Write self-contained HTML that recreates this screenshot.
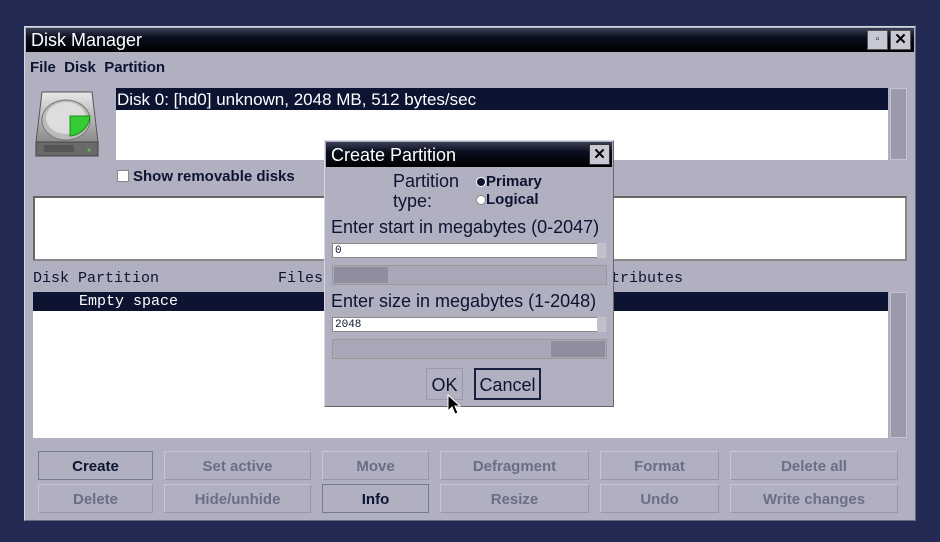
<!DOCTYPE html>
<html><head><style>
*{box-sizing:border-box;margin:0;padding:0}
body{width:940px;height:542px;background:#232b55;position:relative;overflow:hidden;font-family:"Liberation Sans",sans-serif;color:#0c1432}
.a{position:absolute}
.win{left:24px;top:26px;width:892px;height:495px;background:#b0b0c0;border:1px solid #d8d8e4;border-right-color:#6a6a7a;border-bottom-color:#6a6a7a}
.tb{background:linear-gradient(#3a4058,#0a0e1e 40%,#000);color:#fff}
.white{background:#fff}
.sel{background:#0c1432;color:#fff}
.sb{background:#9a9aaa;border:1px solid #c4c4d0}
.btn{position:absolute;height:29px;border:1px solid #9696a8;border-top-color:#c8c8d4;border-left-color:#c8c8d4;text-align:center;font:bold 15px/29px "Liberation Sans",sans-serif;color:#6a6e86}
.btn.on{color:#0c1432;border:1px solid #7a7a8e}
.mono{font-family:"Liberation Mono",monospace;font-size:15px}
</style></head><body>
<div class="a win"></div>
<div class="a tb" style="left:26px;top:28px;width:888px;height:24px;font-size:18px;line-height:25px;padding-left:5px">Disk Manager</div>
<div class="a" style="left:867px;top:30px;width:21px;height:20px;background:#c8c8d4;border:1px solid #555;font-size:10px;text-align:center;line-height:18px;color:#000">▫</div>
<div class="a" style="left:890px;top:30px;width:21px;height:20px;background:#c8c8d4;border:1px solid #555;font:bold 15px/18px sans-serif;text-align:center;color:#000">✕</div>
<div class="a" style="left:30px;top:59px;font-size:15px;font-weight:bold">File&nbsp; Disk&nbsp; Partition</div>
<svg class="a" style="left:34px;top:88px" width="70" height="70" viewBox="0 0 70 70">
<defs><linearGradient id="g" x1="0" y1="0" x2="0" y2="1"><stop offset="0" stop-color="#e8e8e8"/><stop offset="1" stop-color="#8a8a8a"/></linearGradient></defs>
<path d="M8 4h50l6 50H2z" fill="url(#g)" stroke="#555"/>
<rect x="2" y="54" width="62" height="14" fill="#6a6a6a" stroke="#444"/>
<rect x="10" y="57" width="30" height="7" fill="#555"/>
<circle cx="55" cy="62" r="1.5" fill="#4c4"/>
<ellipse cx="32" cy="32" rx="24" ry="20" fill="#bbb" stroke="#777"/>
<ellipse cx="32" cy="30" rx="20" ry="16" fill="#ddd"/>
<path d="M36 28h20a22 22 0 0 1-20 20z" fill="#3c3" stroke="#1a8a1a"/>
</svg>
<div class="a white" style="left:116px;top:88px;width:772px;height:72px"></div>
<div class="a sel" style="left:116px;top:88px;width:772px;height:22px;font-size:17px;line-height:24px;padding-left:1px">Disk 0: [hd0] unknown, 2048 MB, 512 bytes/sec</div>
<div class="a sb" style="left:890px;top:88px;width:17px;height:72px"></div>
<div class="a white" style="left:117px;top:170px;width:12px;height:12px;border:1px solid #888"></div>
<div class="a" style="left:133px;top:168px;font-size:15px;font-weight:bold">Show removable disks</div>
<div class="a white" style="left:33px;top:196px;width:874px;height:65px;border:2px solid #666;border-right-color:#888;border-bottom-color:#888"></div>
<div class="a mono" style="left:33px;top:270px">Disk Partition</div>
<div class="a mono" style="left:278px;top:270px">Filesystem</div>
<div class="a mono" style="left:593px;top:270px">Attributes</div>
<div class="a white" style="left:33px;top:292px;width:855px;height:146px"></div>
<div class="a sel mono" style="left:33px;top:292px;width:855px;height:19px;line-height:20px;padding-left:46px">Empty space</div>
<div class="a sb" style="left:890px;top:292px;width:17px;height:146px"></div>
<div class="btn on" style="left:38px;top:451px;width:115px">Create</div>
<div class="btn" style="left:164px;top:451px;width:147px">Set active</div>
<div class="btn" style="left:322px;top:451px;width:107px">Move</div>
<div class="btn" style="left:440px;top:451px;width:149px">Defragment</div>
<div class="btn" style="left:600px;top:451px;width:119px">Format</div>
<div class="btn" style="left:730px;top:451px;width:168px">Delete all</div>
<div class="btn" style="left:38px;top:484px;width:115px">Delete</div>
<div class="btn" style="left:164px;top:484px;width:147px">Hide/unhide</div>
<div class="btn on" style="left:322px;top:484px;width:107px">Info</div>
<div class="btn" style="left:440px;top:484px;width:149px">Resize</div>
<div class="btn" style="left:600px;top:484px;width:119px">Undo</div>
<div class="btn" style="left:730px;top:484px;width:168px">Write changes</div>
<!-- dialog -->
<div class="a" style="left:324px;top:140px;width:290px;height:267px;background:#b0b0c0;border:1px solid #d8d8e4;border-right-color:#666;border-bottom-color:#666"></div>
<div class="a tb" style="left:326px;top:142px;width:286px;height:25px;font-size:18px;line-height:27px;padding-left:5px">Create Partition</div>
<div class="a" style="left:589px;top:144px;width:21px;height:21px;background:#c8c8d4;border:1px solid #333;font:bold 15px/19px sans-serif;text-align:center;color:#000">✕</div>
<div class="a" style="left:393px;top:171px;font-size:18px;line-height:20px">Partition<br>type:</div>
<div class="a" style="left:476px;top:173px;font-size:15px;font-weight:bold;line-height:18px">
<span style="display:inline-block;width:10px;height:10px;border-radius:50%;background:#0c1432;border:1px solid #fff;vertical-align:-1px"></span>Primary<br>
<span style="display:inline-block;width:10px;height:10px;border-radius:50%;background:#fff;border:1px solid #888;vertical-align:-1px"></span>Logical</div>
<div class="a" style="left:331px;top:217px;font-size:18px;white-space:nowrap">Enter start in megabytes (0-2047)</div>
<div class="a white" style="left:332px;top:243px;width:266px;height:15px;border:1px solid #888;font:11px/14px 'Liberation Mono',monospace;padding-left:2px">0</div>
<div class="a sb" style="left:597px;top:243px;width:9px;height:15px;background:#c0c0cc"></div>
<div class="a" style="left:332px;top:265px;width:275px;height:20px;border:1px solid #999;background:#a8a8b8"></div>
<div class="a" style="left:334px;top:267px;width:54px;height:16px;background:#8e8e9e"></div>
<div class="a" style="left:331px;top:291px;font-size:18px;white-space:nowrap">Enter size in megabytes (1-2048)</div>
<div class="a white" style="left:332px;top:317px;width:266px;height:15px;border:1px solid #888;font:11px/14px 'Liberation Mono',monospace;padding-left:2px">2048</div>
<div class="a sb" style="left:597px;top:317px;width:9px;height:15px;background:#c0c0cc"></div>
<div class="a" style="left:332px;top:339px;width:275px;height:20px;border:1px solid #999;background:#a8a8b8"></div>
<div class="a" style="left:551px;top:341px;width:54px;height:16px;background:#8e8e9e"></div>
<div class="a" style="left:426px;top:368px;width:37px;height:32px;border:1px solid #9a9aaa;font-size:18px;line-height:32px;text-align:center">OK</div>
<div class="a" style="left:474px;top:368px;width:67px;height:32px;border:2px solid #1a2040;font-size:18px;line-height:30px;text-align:center">Cancel</div>
<svg class="a" style="left:447px;top:394px" width="14" height="22" viewBox="0 0 14 22"><path d="M1 1v16l4-4 3 7 3-1-3-7h5z" fill="#000" stroke="#fff" stroke-width="1"/></svg>
</body></html>
